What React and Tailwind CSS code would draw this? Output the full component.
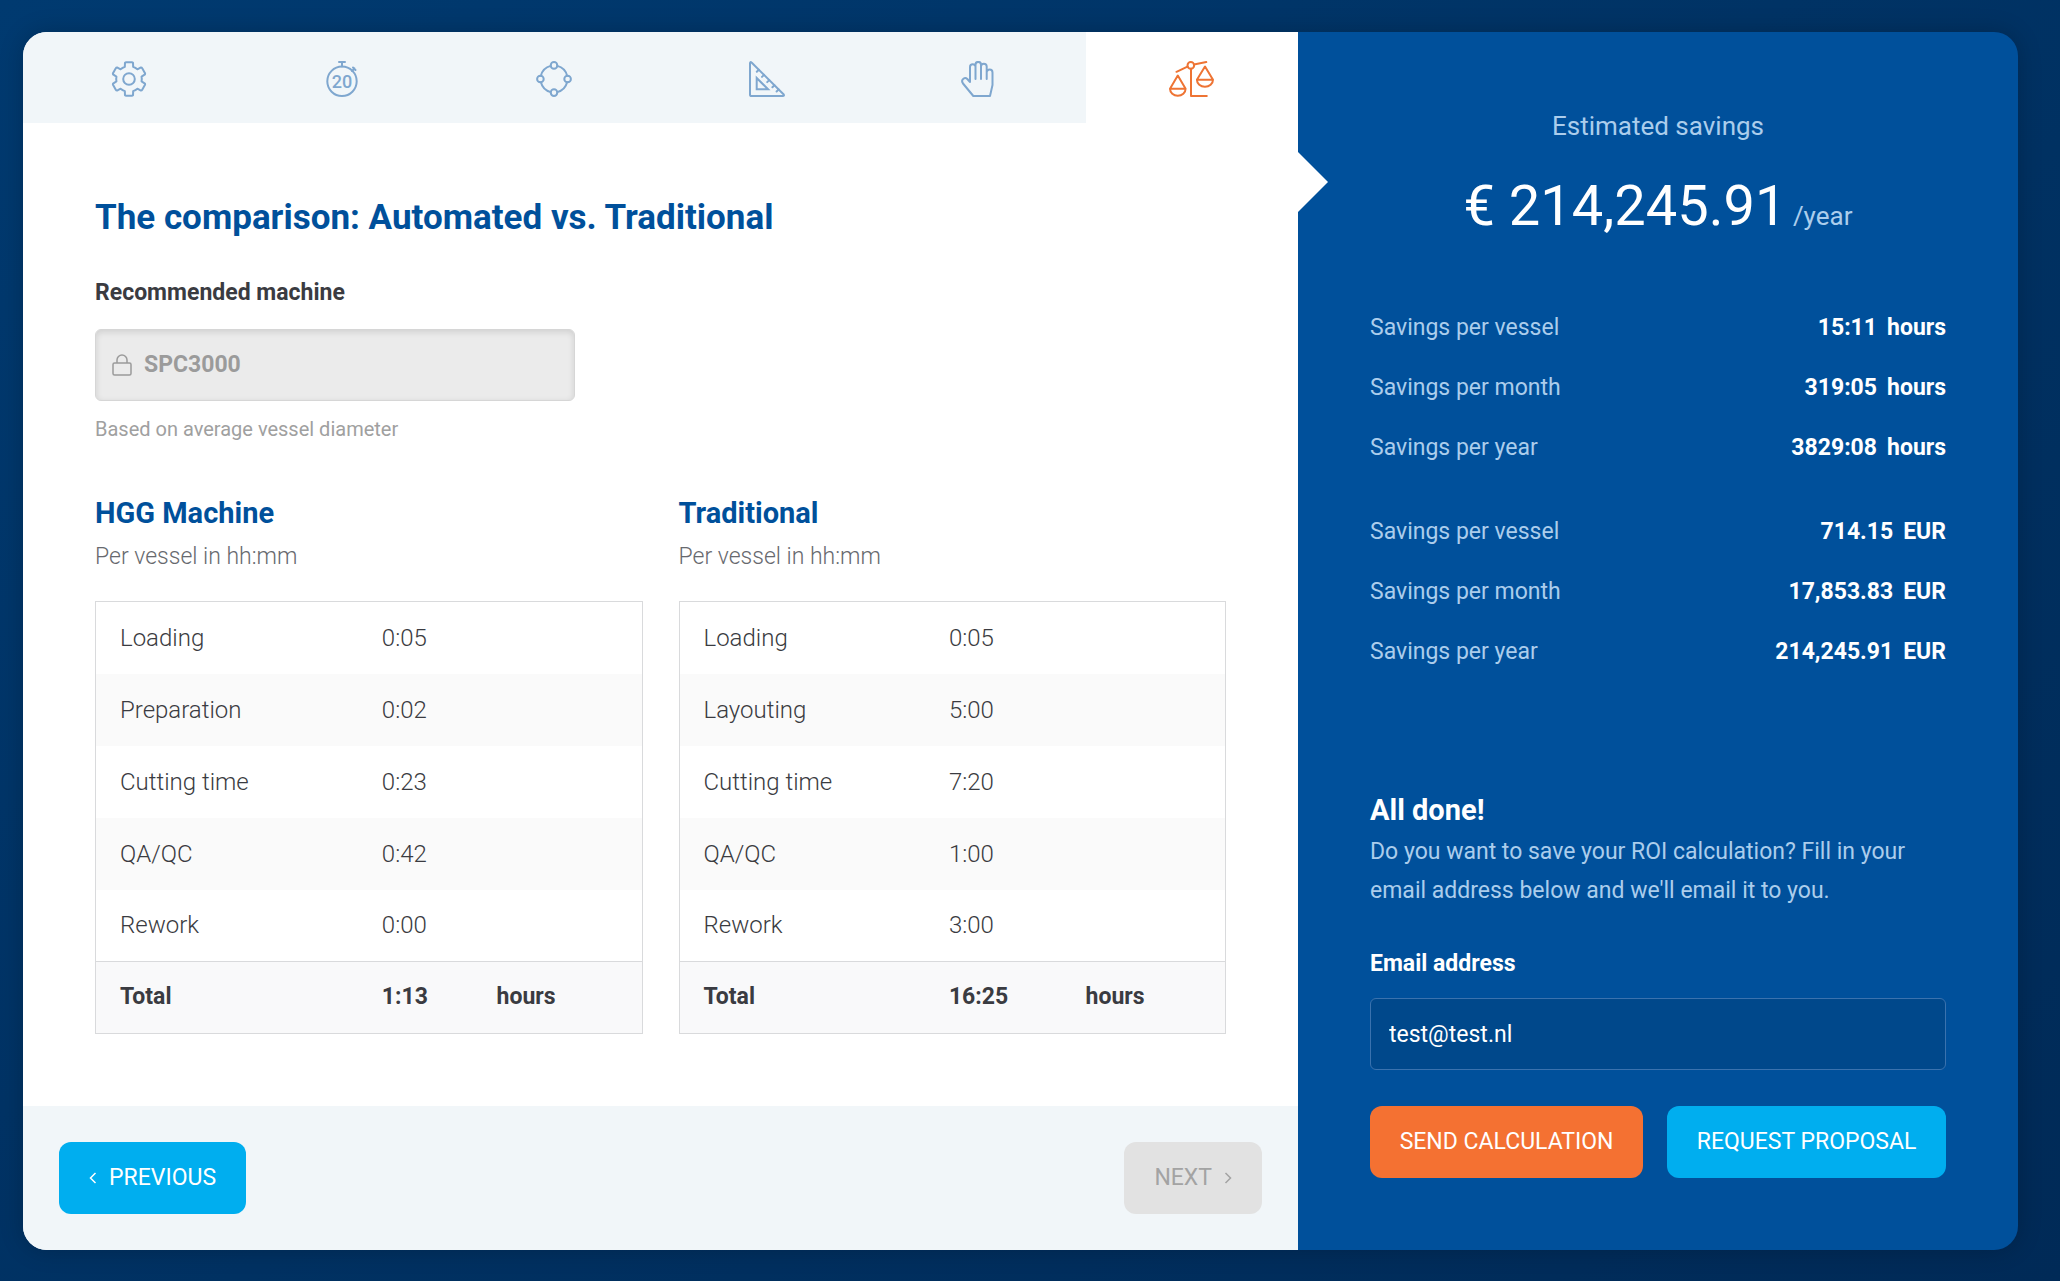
import { useState } from "react";

const machineRows = [
    { label: "Loading", time: "0:05" },
    { label: "Preparation", time: "0:02" },
    { label: "Cutting time", time: "0:23" },
    { label: "QA/QC", time: "0:42" },
    { label: "Rework", time: "0:00" },
];

const traditionalRows = [
    { label: "Loading", time: "0:05" },
    { label: "Layouting", time: "5:00" },
    { label: "Cutting time", time: "7:20" },
    { label: "QA/QC", time: "1:00" },
    { label: "Rework", time: "3:00" },
];

const savings = [
    [
        { label: "Savings per vessel", value: "15:11", unit: "hours" },
        { label: "Savings per month", value: "319:05", unit: "hours" },
        { label: "Savings per year", value: "3829:08", unit: "hours" },
    ],
    [
        { label: "Savings per vessel", value: "714.15", unit: "EUR" },
        { label: "Savings per month", value: "17,853.83", unit: "EUR" },
        { label: "Savings per year", value: "214,245.91", unit: "EUR" },
    ],
];

const Icon = ({ width = 36, children }) => (
    <svg
        width={width}
        height="36"
        viewBox={`0 0 ${width} 36`}
        fill="none"
        stroke="currentColor"
        strokeWidth="2"
        strokeLinecap="round"
        strokeLinejoin="round"
        aria-hidden="true"
    >
        {children}
    </svg>
);

const polar = (radius, deg) => {
    const rad = (deg * Math.PI) / 180;
    return `${(18 + radius * Math.sin(rad)).toFixed(2)} ${(18 - radius * Math.cos(rad)).toFixed(2)}`;
};

// six teeth, one every 60 degrees
const gearPath =
    [0, 60, 120, 180, 240, 300]
        .map(
            (a, i) =>
                `${i === 0 ? "M" : "A12.8 12.8 0 0 1 "}${polar(12.8, a - 19)}L${polar(16.6, a - 14)}Q${polar(17.2, a - 12)} ${polar(17, a - 9)}L${polar(17, a + 9)}Q${polar(17.2, a + 12)} ${polar(16.6, a + 14)}L${polar(12.8, a + 19)}`,
        )
        .join("") + "A12.8 12.8 0 0 1 " + polar(12.8, -19) + "Z";

const GearIcon = () => (
    <Icon>
        <path d={gearPath} />
        <circle cx="18" cy="18" r="5.8" />
    </Icon>
);

const StopwatchIcon = () => (
    <Icon>
        <circle cx="18" cy="20.3" r="14.7" />
        <path d="M15 1h6M18 1v4.5M28 10l2.5-2.5M29 6.5l2.5 2.5" />
        <text
            x="18"
            y="27"
            textAnchor="middle"
            fill="currentColor"
            stroke="none"
            className="text-[18px] font-medium"
        >
            20
        </text>
    </Icon>
);

const NodesIcon = () => (
    <Icon>
        <circle cx="18" cy="4.4" r="3.3" />
        <circle cx="31.6" cy="18" r="3.3" />
        <circle cx="18" cy="31.6" r="3.3" />
        <circle cx="4.4" cy="18" r="3.3" />
        <path d="M21.3 4.9A13.6 13.6 0 0 1 31.1 14.7M31.1 21.3A13.6 13.6 0 0 1 21.3 31.1M14.7 31.1A13.6 13.6 0 0 1 4.9 21.3M4.9 14.7A13.6 13.6 0 0 1 14.7 4.9" />
    </Icon>
);

const TriangleIcon = () => (
    <Icon>
        <path d="M1 2.4Q1 .2 2.8 1.7L34.5 33.2Q35.8 35 33.6 35H2.6Q1 35 1 33.4Z" />
        <path d="M7.7 17v11.3h11.4Z" strokeLinejoin="miter" />
        <path d="M9.8 8.7l-2 2M15 13.9l-2 2M20.2 19.1l-2 2M25.4 24.3l-2 2M29.6 28.5l-2 2" />
    </Icon>
);

const HandIcon = () => (
    <Icon>
        <path d="M9 21V6a2.75 2.75 0 0 1 5.5 0V18M14.5 6V3.7a2.75 2.75 0 0 1 5.5 0V18M20 5.5a2.85 2.85 0 0 1 5.7 0V18M25.7 11.5a2.9 2.9 0 0 1 5.8 0V24L29 35H12.3L2 22.5C.6 20.5 1 18.8 2.4 17.7C3.8 16.7 5.3 17 6.3 18L9 21" />
    </Icon>
);

const ScalesIcon = () => (
    <Icon width={45}>
        <circle cx="21.8" cy="4.4" r="3.3" />
        <path d="M7.5 10.8l11-5.2M25 3.6l12.3-2.5M22 7.8V35h15.8" />
        <path d="M8.8 14.5L1 27.8h15.6ZM1 27.8a7.8 7 0 0 0 15.6 0" />
        <path d="M36 5.5l-8.1 13.3H44ZM27.9 18.8a8 7 0 0 0 16.1 0" />
    </Icon>
);

const LockIcon = () => (
    <svg
        width="20"
        height="22"
        viewBox="0 0 20 22"
        fill="none"
        stroke="currentColor"
        strokeWidth="1.5"
        aria-hidden="true"
    >
        <rect x="1" y="9" width="18" height="12" rx="1.5" />
        <path d="M5 9V6a5 5 0 0 1 10 0v3" />
    </svg>
);

const ChevronIcon = ({ d }) => (
    <svg
        width="8"
        height="14"
        viewBox="0 0 8 14"
        fill="none"
        stroke="currentColor"
        strokeWidth="1.5"
        aria-hidden="true"
    >
        <path d={d} />
    </svg>
);

const tabs = [
    { name: "Machine", icon: <GearIcon /> },
    { name: "Time", icon: <StopwatchIcon /> },
    { name: "Nodes", icon: <NodesIcon /> },
    { name: "Measures", icon: <TriangleIcon /> },
    { name: "Manual work", icon: <HandIcon /> },
    { name: "Comparison", icon: <ScalesIcon /> },
];

const TimeTable = ({ title, rows, total, cols }) => (
    <section>
        <h3 className="text-[29px] font-bold leading-10 text-[#00509b]">
            {title}
        </h3>
        <p className="mt-1 font-light leading-10 text-[#67696e]">
            Per vessel in hh:mm
        </p>
        <table className="mt-6 w-full table-fixed border-collapse border border-[#d9dadc] text-left text-[#3a3b41]">
            <colgroup>
                <col className={cols[0]} />
                <col className={cols[1]} />
                <col />
            </colgroup>
            <tbody className="text-2xl font-light">
                {rows.map((row) => (
                    <tr key={row.label} className="h-18 even:bg-[#fafafa]">
                        <th scope="row" className="px-6 font-light">
                            {row.label}
                        </th>
                        <td className="px-6">{row.time}</td>
                        <td></td>
                    </tr>
                ))}
            </tbody>
            <tfoot className="border-t border-[#d9dadc] bg-[#f9f9fa] font-bold">
                <tr className="h-18">
                    <th scope="row" className="px-6">
                        Total
                    </th>
                    <td className="px-6">{total}</td>
                    <td className="px-6">hours</td>
                </tr>
            </tfoot>
        </table>
    </section>
);

const App = () => {
    const [active, setActive] = useState(5);
    const [email, setEmail] = useState("test@test.nl");

    return (
        <div className="flex min-h-screen bg-linear-to-br from-[#003a70] to-[#002a57] pb-[31px] pl-[23px] pr-[42px] pt-8 font-['Roboto','Liberation_Sans',sans-serif] text-[23px]">
            <div className="grid flex-1 grid-cols-[85fr_48fr] rounded-3xl shadow-[0_0_24px_rgba(0,0,0,0.2)]">
                <main className="flex flex-col overflow-hidden rounded-l-3xl bg-white">
                    <nav className="grid h-[91px] shrink-0 grid-cols-6">
                        {tabs.map((tab, index) => (
                            <button
                                key={tab.name}
                                type="button"
                                aria-label={tab.name}
                                onClick={() => setActive(index)}
                                className={
                                    index === active
                                        ? "flex cursor-pointer items-center justify-center bg-white pt-[3px] text-[#ee7434]"
                                        : "flex cursor-pointer items-center justify-center bg-[#f1f6f9] pt-[3px] text-[#7fa7cf]"
                                }
                            >
                                {tab.icon}
                            </button>
                        ))}
                    </nav>

                    <div className="flex-1 p-18">
                        <h1 className="text-[35px] font-bold leading-[46px] text-[#00509b]">
                            The comparison: Automated vs. Traditional
                        </h1>
                        <label
                            htmlFor="machine"
                            className="mt-8 block font-bold leading-10 text-[#3a3b41]"
                        >
                            Recommended machine
                        </label>
                        <div className="mt-4 flex h-18 max-w-[480px] items-center gap-3 rounded-md border border-[#d6d6d6] bg-[#ebebeb] px-4 text-[#9b9b9b] shadow-[inset_0_2px_6px_rgba(0,0,0,0.12)]">
                            <LockIcon />
                            <input
                                id="machine"
                                type="text"
                                value="SPC3000"
                                disabled
                                className="min-w-0 flex-1 bg-transparent font-bold"
                            />
                        </div>
                        <p className="mt-3 text-xl leading-8 text-[#a0a0a0]">
                            Based on average vessel diameter
                        </p>

                        <div className="mt-12 grid grid-cols-2 gap-9">
                            <TimeTable
                                title="HGG Machine"
                                rows={machineRows}
                                total="1:13"
                                cols={["w-[48%]", "w-[21%]"]}
                            />
                            <TimeTable
                                title="Traditional"
                                rows={traditionalRows}
                                total="16:25"
                                cols={["w-[45%]", "w-[25%]"]}
                            />
                        </div>
                    </div>

                    <footer className="flex justify-between bg-[#f1f6f9] p-9">
                        <button
                            type="button"
                            className="flex h-18 cursor-pointer items-center gap-3 rounded-xl bg-[#00aeef] px-[30px] text-white"
                        >
                            <ChevronIcon d="M6.5 2l-5 5l5 5" />
                            PREVIOUS
                        </button>
                        <button
                            type="button"
                            disabled
                            className="flex h-18 items-center gap-3 rounded-xl bg-[#e2e2e2] px-[30px] text-[#a3a3a3]"
                        >
                            NEXT
                            <ChevronIcon d="M1.5 2l5 5l-5 5" />
                        </button>
                    </footer>
                </main>

                <aside className="relative flex flex-col rounded-r-3xl bg-[#00509b] p-18 text-[#abcdec]">
                    <div className="absolute left-0 top-[120px] border-y-[30px] border-l-[30px] border-y-transparent border-l-white"></div>

                    <div className="text-center text-[26px] leading-11">
                        <h2>Estimated savings</h2>
                        <p className="mt-5 leading-[76px]">
                            <span className="text-[56px] text-white">
                                € 214,245.91
                            </span>{" "}
                            /year
                        </p>
                    </div>

                    <div className="mt-11 flex flex-col gap-6">
                        {savings.map((group) => (
                            <dl key={group[0].unit}>
                                {group.map((item) => (
                                    <div
                                        key={item.label}
                                        className="flex h-15 items-center justify-between"
                                    >
                                        <dt>{item.label}</dt>
                                        <dd className="flex gap-2.5 font-bold text-white">
                                            <span>{item.value}</span>
                                            <span>{item.unit}</span>
                                        </dd>
                                    </div>
                                ))}
                            </dl>
                        ))}
                    </div>

                    <form
                        className="mt-auto pt-12"
                        onSubmit={(e) => e.preventDefault()}
                    >
                        <h2 className="text-[29px] font-bold leading-11 text-white">
                            All done!
                        </h2>
                        <p className="leading-[39px]">
                            Do you want to save your ROI calculation? Fill in
                            your email address below and we'll email it to you.
                        </p>
                        <label
                            htmlFor="email"
                            className="mt-9 block font-bold leading-9 text-white"
                        >
                            Email address
                        </label>
                        <input
                            id="email"
                            type="email"
                            value={email}
                            onChange={(e) => setEmail(e.target.value)}
                            className="mt-4 h-18 w-full rounded-md border border-[#3a72ae] bg-[#00488b] px-[18px] text-white outline-none"
                        />
                        <div className="mt-9 flex gap-6">
                            <button
                                type="submit"
                                className="h-18 flex-auto cursor-pointer whitespace-nowrap rounded-xl bg-[#f47132] text-white"
                            >
                                SEND CALCULATION
                            </button>
                            <button
                                type="button"
                                className="h-18 flex-auto cursor-pointer whitespace-nowrap rounded-xl bg-[#00aeef] text-white"
                            >
                                REQUEST PROPOSAL
                            </button>
                        </div>
                    </form>
                </aside>
            </div>
        </div>
    );
};

export default App;
